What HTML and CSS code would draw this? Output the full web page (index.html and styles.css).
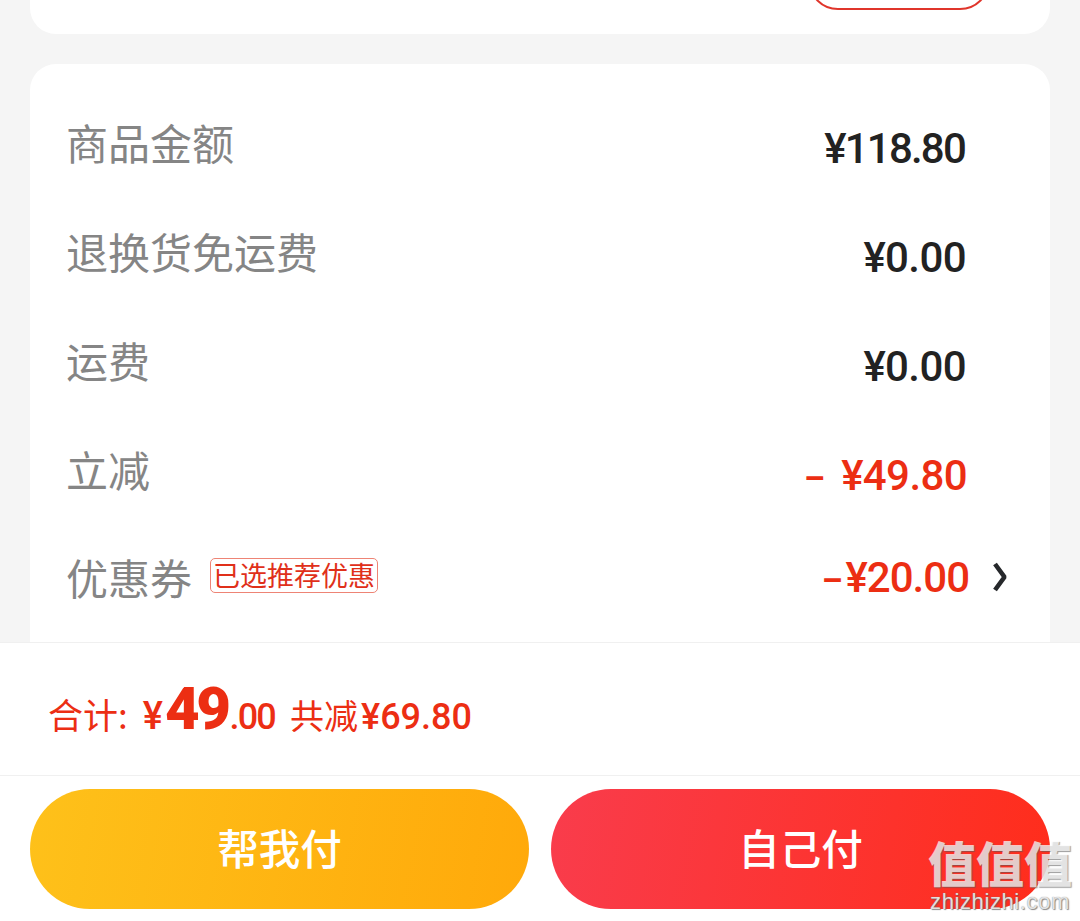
FILE: index.html
```html
<!DOCTYPE html>
<html lang="zh-CN">
<head>
  <meta charset="UTF-8">
  <title>确认订单</title>
  <link rel="stylesheet" href="styles.css">
</head>
<body>

  <div class="page">
    <main class="content">
      <section class="card card-top">
        <span class="outline-button"></span>
      </section>

      <section class="card card-price">
        <div class="row">
          <span class="label">商品金额</span>
          <span class="value tight">¥118.80</span>
        </div>
        <div class="row">
          <span class="label">退换货免运费</span>
          <span class="value">¥0.00</span>
        </div>
        <div class="row">
          <span class="label">运费</span>
          <span class="value">¥0.00</span>
        </div>
        <div class="row">
          <span class="label">立减</span>
          <span class="value red cut-value"><span class="minus minus-gap">–</span>¥49.80</span>
        </div>
        <div class="row row-coupon">
          <span class="label">优惠券</span>
          <span class="tag">已选推荐优惠</span>
          <span class="value red coupon-value"><span class="minus">–</span>¥20.00</span>
          <svg class="arrow" width="14" height="30" viewBox="0 0 14 30">
            <path d="M2 2 L11.5 15 L2 28" fill="none" stroke="#26282b" stroke-width="4.6" stroke-linejoin="bevel"/>
          </svg>
        </div>
      </section>
    </main>

    <footer>
      <div class="total">
        <span class="total-label">合计:</span>
        <span class="yen">¥</span><span class="big">49</span><span class="cents">.00</span>
        <span class="saved"><span class="saved-label">共减</span>¥69.80</span>
      </div>
      <div class="buttons">
        <a href="#" class="pay-button pay-friend">帮我付</a>
        <a href="#" class="pay-button pay-self">自己付</a>
      </div>
    </footer>

    <div class="watermark">
      <div class="watermark-logo">值值值</div>
      <div class="watermark-url">zhizhizhi.com</div>
    </div>
  </div>

</body>
</html>
```

FILE: styles.css
```css
html, body {
  margin: 0;
  padding: 0;
}

body {
  font-family: "Noto Sans CJK SC", "Roboto", sans-serif;
  background-color: #f5f5f5;
  color: #222;
}

.page {
  position: relative;
  display: flex;
  flex-direction: column;
  height: 921px;
  overflow: hidden;
}

.content {
  flex: 1;
  min-height: 0;
  overflow: hidden;
  padding: 0 30px;
}

.card {
  background-color: #fff;
  border-radius: 26px;
}

.card-top {
  display: flex;
  justify-content: flex-end;
  align-items: flex-end;
  height: 34px;
  border-radius: 0 0 26px 26px;
  margin-bottom: 30px;
  padding-right: 60px;
  overflow: hidden;
  box-sizing: border-box;
}

.outline-button {
  flex: none;
  width: 182px;
  height: 60px;
  margin-bottom: 24px;
  border: 2px solid #e0352b;
  border-radius: 32px;
  box-sizing: border-box;
}

.card-price {
  padding: 27px 84px 40px 36px;
  height: 640px;
  box-sizing: border-box;
}

.row {
  display: flex;
  align-items: center;
  height: 109px;
}

.label {
  font-size: 42px;
  line-height: 56px;
  color: #858585;
  margin-top: -8px;
}

.value {
  margin-left: auto;
  margin-top: 6px;
  font-family: "Roboto", sans-serif;
  font-size: 42px;
  font-weight: 500;
  line-height: 56px;
  letter-spacing: -0.6px;
  color: #222;
}

.tight {
  letter-spacing: -1.8px;
  margin-right: 1px;
}

.red {
  color: #ec2e13;
}

.minus {
  font-size: 33px;
  font-weight: 700;
  margin-right: 4px;
}

.minus-gap {
  margin-right: 17px;
}

.cut-value {
  margin-top: 10px;
  margin-right: -1px;
}

.row-coupon {
  height: 100px;
  position: relative;
}

.row-coupon .label {
  margin-top: 0;
}

.tag {
  margin-left: 18px;
  margin-top: -3px;
  padding: 0 2px;
  height: 35px;
  line-height: 32px;
  font-size: 27px;
  color: #e0301a;
  border: 1px solid #ee8475;
  border-radius: 5px;
  box-sizing: border-box;
  white-space: nowrap;
}

.coupon-value {
  margin-top: 4px;
  margin-right: -3px;
  letter-spacing: -1px;
}

.arrow {
  position: absolute;
  right: -41px;
  top: 35px;
}

footer {
  flex: none;
  background-color: #fff;
  border-top: 1px solid #f0f0f0;
}

.total {
  display: flex;
  align-items: baseline;
  height: 133px;
  box-sizing: border-box;
  padding: 30px 0 0 48px;
  color: #ec2e13;
  border-bottom: 1px solid #f0f0f0;
  font-family: "Roboto", sans-serif;
  white-space: nowrap;
}

.total-label {
  font-family: "Noto Sans CJK SC", sans-serif;
  font-size: 35px;
  margin-right: 15px;
}

.yen {
  font-size: 38px;
  font-weight: 500;
}

.big {
  font-size: 60px;
  font-weight: 900;
  letter-spacing: -3.5px;
  margin-left: 2px;
}

.cents {
  font-size: 36px;
  font-weight: 500;
  letter-spacing: -1.8px;
  margin-left: 2px;
}

.saved {
  font-size: 36px;
  font-weight: 500;
  margin-left: 15px;
}

.saved-label {
  font-family: "Noto Sans CJK SC", sans-serif;
  font-size: 34px;
  font-weight: 400;
  margin-right: 3px;
}

.buttons {
  display: flex;
  gap: 22px;
  padding: 13px 30px 12px;
}

.pay-button {
  flex: 1;
  height: 120px;
  border-radius: 60px;
  color: #fff;
  font-size: 41.5px;
  font-weight: 500;
  line-height: 116px;
  text-align: center;
  text-decoration: none;
}

.pay-friend {
  background: linear-gradient(100deg, #fec11a, #ffa90a);
}

.pay-self {
  background: linear-gradient(100deg, #f93c4c, #ff2d1b);
}

.watermark {
  position: absolute;
  right: 8px;
  bottom: 8px;
  width: 144px;
  text-align: center;
  color: rgba(255, 255, 255, 0.72);
}

.watermark-logo {
  font-size: 48px;
  font-weight: 900;
  line-height: 50px;
  text-shadow: 1px 1px 1px rgba(90, 90, 90, 0.6);
  white-space: nowrap;
}

.watermark-url {
  font-family: "Liberation Sans", sans-serif;
  font-size: 22px;
  line-height: 22px;
  letter-spacing: 0.6px;
  margin-top: 5px;
  color: rgba(255, 255, 255, 0.8);
  text-shadow: 0 0 1px #777, 1px 1px 1px rgba(90, 90, 90, 0.7);
  white-space: nowrap;
}
```
